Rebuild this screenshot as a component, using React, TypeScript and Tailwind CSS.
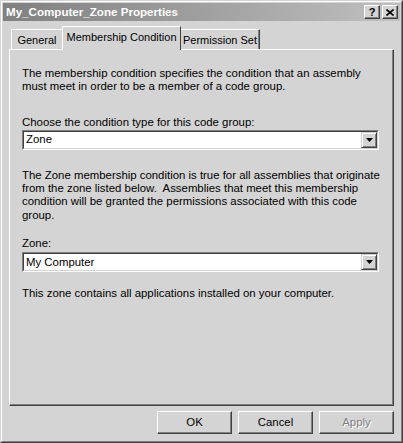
import React from "react";

const font = { fontFamily: '"Liberation Sans", Arial, sans-serif' };

function Select({ value }: { value: string }) {
  return (
    <div className="mr-[14px] flex h-[20px] items-stretch border border-t-[#808080] border-l-[#808080] border-r-white border-b-white">
      <div className="flex flex-1 items-stretch border border-t-[#404040] border-l-[#404040] border-r-[#d4d4d4] border-b-[#d4d4d4] bg-white">
        <div className="flex flex-1 items-center pl-[2px] text-[11.4px] text-black">{value}</div>
        <div className="flex w-[16px] items-center justify-center border border-t-[#d4d4d4] border-l-[#d4d4d4] border-r-[#404040] border-b-[#404040] bg-[#d4d4d4] shadow-[inset_1px_1px_0_white,inset_-1px_-1px_0_#808080]">
          <svg width="7" height="4" viewBox="0 0 7 4"><path d="M0 0h7L3.5 4z" fill="black" /></svg>
        </div>
      </div>
    </div>
  );
}

function Btn({ label, disabled }: { label: string; disabled?: boolean }) {
  return (
    <div className="flex h-[23px] w-[75px] items-center justify-center border border-t-white border-l-white border-r-[#404040] border-b-[#404040] bg-[#d4d4d4] shadow-[inset_-1px_-1px_0_#808080] text-[11.4px]">
      <span className={disabled ? "text-[#808080] [text-shadow:1px_1px_0_white]" : "text-black"}>{label}</span>
    </div>
  );
}

export default function App() {
  return (
    <div style={font} className="h-[443px] w-[403px] bg-[#d4d4d4] border border-t-[#d4d4d4] border-l-[#d4d4d4] border-r-[#404040] border-b-[#404040]">
      <div className="flex h-full flex-col border border-t-white border-l-white border-r-[#808080] border-b-[#808080] p-[1px]">
        {/* title bar */}
        <div className="flex h-[18px] items-center justify-between bg-gradient-to-r from-[#808080] to-[#c0c0c0] pl-[3px] pr-[2px]">
          <span className="text-[11.6px] font-bold text-white">My_Computer_Zone Properties</span>
          <div className="flex gap-[2px]">
            <div className="flex h-[14px] w-[16px] items-center justify-center border border-t-white border-l-white border-r-[#404040] border-b-[#404040] bg-[#d4d4d4] shadow-[inset_-1px_-1px_0_#808080] text-[11px] font-bold leading-none text-black">?</div>
            <div className="flex h-[14px] w-[16px] items-center justify-center border border-t-white border-l-white border-r-[#404040] border-b-[#404040] bg-[#d4d4d4] shadow-[inset_-1px_-1px_0_#808080]">
              <svg width="8" height="7" viewBox="0 0 8 7"><path d="M0.5 0.5L7.5 6.5M7.5 0.5L0.5 6.5" stroke="black" strokeWidth="1.6" /></svg>
            </div>
          </div>
        </div>

        {/* tabs */}
        <div className="mt-[5px] flex items-end whitespace-nowrap pl-[8px] text-[11px] text-black">
          <div className="flex h-[20px] w-[52px] items-center justify-center rounded-tl-[2px] border-l border-t border-white border-r border-r-[#404040] pt-[2px]">General</div>
          <div className="-mb-[1px] z-10 -ml-[1px] flex h-[24px] w-[119px] items-center justify-center rounded-tl-[2px] border-l border-t border-white border-r border-r-[#404040] bg-[#d4d4d4] pb-[2px]">Membership Condition</div>
          <div className="flex h-[20px] w-[79px] items-center justify-center border-t border-white border-r border-r-[#404040] pt-[2px] shadow-[inset_-1px_0_0_#808080]">Permission Set</div>
        </div>

        {/* panel */}
        <div className="mx-[6px] flex h-[357px] flex-col border border-t-white border-l-white border-r-[#404040] border-b-[#404040] shadow-[inset_-1px_-1px_0_#808080] pl-[12px] pt-[17px] text-[11.4px] leading-[13.3px] text-black">
          <p>The membership condition specifies the condition that an assembly<br />must meet in order to be a member of a code group.</p>
          <p className="mt-[22px] mb-[1px]">Choose the condition type for this code group:</p>
          <Select value="Zone" />
          <p className="mt-[19px]">The Zone membership condition is true for all assemblies that originate<br />from the zone listed below.&nbsp; Assemblies that meet this membership<br />condition will be granted the permissions associated with this code<br />group.</p>
          <p className="mt-[15px] mb-[2px]">Zone:</p>
          <Select value="My Computer" />
          <p className="mt-[15px]">This zone contains all applications installed on your computer.</p>
        </div>

        {/* buttons */}
        <div className="mt-[5px] flex justify-end gap-[6px] pr-[6px]">
          <Btn label="OK" />
          <Btn label="Cancel" />
          <Btn label="Apply" disabled />
        </div>
      </div>
    </div>
  );
}
